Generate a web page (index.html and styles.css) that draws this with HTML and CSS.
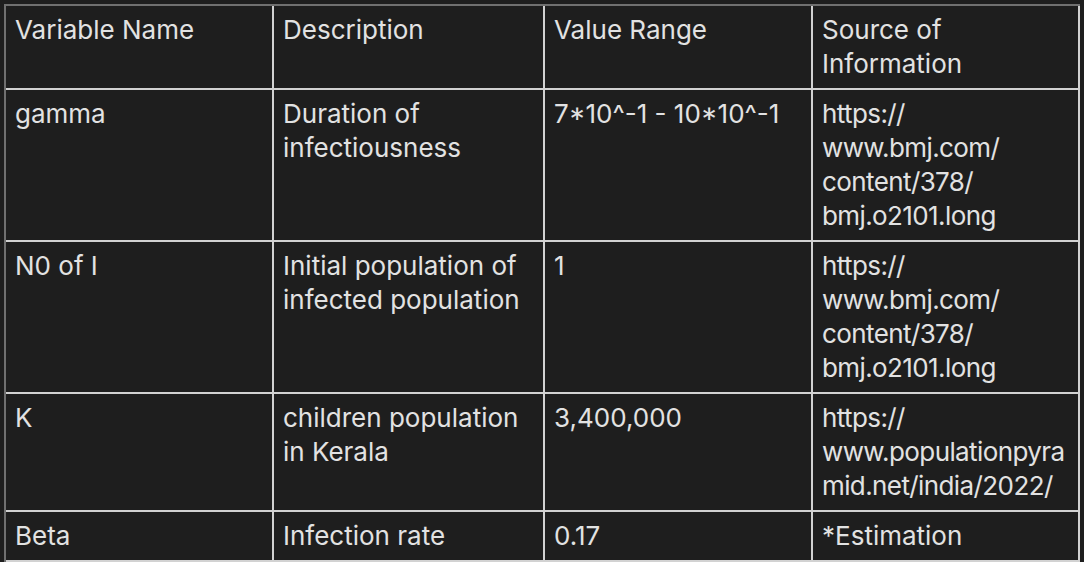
FILE: index.html
```html
<!DOCTYPE html>
<html>
<head>
<meta charset="utf-8">
<link rel="stylesheet" href="styles.css">
</head>
<body>
<table class="data">
  <colgroup>
    <col class="c1"><col class="c2"><col class="c3"><col class="c4">
  </colgroup>
  <tr>
    <td>Variable Name</td>
    <td>Description</td>
    <td>Value Range</td>
    <td>Source of Information</td>
  </tr>
  <tr>
    <td>gamma</td>
    <td>Duration of infectiousness</td>
    <td>7*10^-1 - 10*10^-1</td>
    <td class="url">https://<wbr>www.bmj.com/<wbr>content/378/<wbr>bmj.o2101.long</td>
  </tr>
  <tr>
    <td>N0 of I</td>
    <td>Initial population of infected population</td>
    <td>1</td>
    <td class="url">https://<wbr>www.bmj.com/<wbr>content/378/<wbr>bmj.o2101.long</td>
  </tr>
  <tr>
    <td>K</td>
    <td>children population in Kerala</td>
    <td>3,400,000</td>
    <td class="url">https://<wbr>www.populationpyra<wbr>mid.net/india/2022/</td>
  </tr>
  <tr>
    <td>Beta</td>
    <td>Infection rate</td>
    <td>0.17</td>
    <td>*Estimation</td>
  </tr>
</table>
</body>
</html>
```

FILE: styles.css
```css
html, body {
  margin: 0;
  background: #1e1e1e;
}
body {
  padding: 4px;
  font-family: Inter, "Noto Sans", sans-serif;
  font-size: 26px;
  line-height: 34px;
  color: #e2e2e2;
}
.data {
  border-collapse: separate;
  border-spacing: 0;
  table-layout: fixed;
  width: 1076px;
  border-top: 2px solid #707070;
  border-left: 2px solid #707070;
}
.c1 { width: 268px; }
.c2 { width: 271px; }
.c3 { width: 268px; }
.c4 { width: 267px; }
.data td {
  vertical-align: top;
  padding: 7px 8px 7px 9px;
  border-right: 2px solid #d2d2d2;
  border-bottom: 2px solid #d2d2d2;
  overflow-wrap: anywhere;
}
.data td.url {
  letter-spacing: -0.6px;
}
```
